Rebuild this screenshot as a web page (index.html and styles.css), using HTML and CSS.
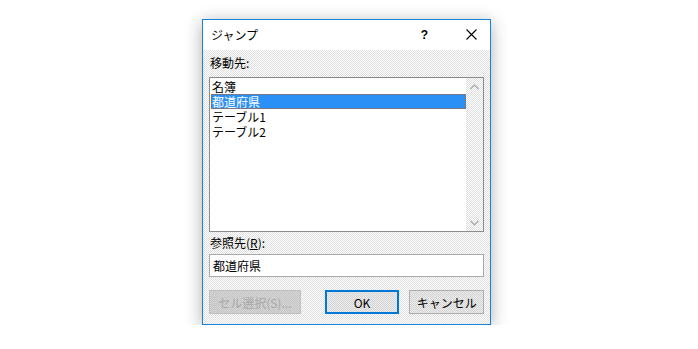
FILE: index.html
```html
<!DOCTYPE html>
<html lang="ja">

<head>
  <meta charset="UTF-8" />
  <title>ジャンプ</title>
  <link rel="stylesheet" href="styles.css">
</head>

<body>

  <div class="dialog">
    <div class="titlebar">
      <span class="title">ジャンプ</span>
      <span class="help">?</span>
      <span class="close">
        <svg width="11" height="11" viewBox="0 0 11 11">
          <path d="M0.5 0.5 L10.5 10.5 M10.5 0.5 L0.5 10.5" stroke="#000" stroke-width="1.1" fill="none" />
        </svg>
      </span>
    </div>

    <div class="content">
      <div class="label">移動先:</div>

      <div class="listbox">
        <ul class="items">
          <li>名簿</li>
          <li class="selected">都道府県</li>
          <li>テーブル1</li>
          <li>テーブル2</li>
        </ul>
        <div class="scrollbar">
          <svg width="9" height="6" viewBox="0 0 9 6">
            <path d="M0.5 5 L4.5 1 L8.5 5" stroke="#a6a6a6" stroke-width="1.2" fill="none" />
          </svg>
          <svg width="9" height="6" viewBox="0 0 9 6">
            <path d="M0.5 1 L4.5 5 L8.5 1" stroke="#a6a6a6" stroke-width="1.2" fill="none" />
          </svg>
        </div>
      </div>

      <div class="label ref">参照先(<u>R</u>):</div>
      <div class="textbox">都道府県</div>

      <div class="buttons">
        <button class="btn disabled">セル選択(S)...</button>
        <button class="btn default">OK</button>
        <button class="btn">キャンセル</button>
      </div>
    </div>
  </div>

</body>

</html>
```

FILE: styles.css
```css
body {
  margin: 0;
  background: #fff;
  font-family: "Noto Sans CJK JP", "Noto Sans", sans-serif;
  font-size: 12px;
  color: #000;
}

/* grey areas are dithered in the shot, so use a 2px checker */
.dialog {
  box-sizing: border-box;
  width: 289px;
  height: 306px;
  margin: 19px 0 0 202px;
  border: 1px solid #1883d7;
  background-color: #fff;
  background-image: repeating-conic-gradient(#dedede 0 25%, #fff 0 50%);
  background-size: 2px 2px;
  box-shadow: 0 3px 16px rgba(0, 0, 0, 0.32);
}

.titlebar {
  display: flex;
  align-items: center;
  height: 29px;
  background: #fff;
  padding-bottom: 1px;
}

.title {
  margin-left: 8px;
  line-height: 16px;
  flex: 1;
}

.help {
  font-family: "Liberation Sans", sans-serif;
  font-size: 12px;
  font-weight: bold;
  margin-right: 38px;
}

.close {
  display: flex;
  margin-right: 13px;
}

.content {
  padding: 0 6px;
}

.label {
  margin-top: 5px;
  padding-left: 1px;
  line-height: 16px;
  height: 16px;
}

.label.ref {
  margin-top: 3px;
}

.listbox {
  box-sizing: border-box;
  display: flex;
  height: 155px;
  margin-top: 6px;
  border: 1px solid #8c8c8c;
  background: #fff;
}

.items {
  flex: 1;
  list-style: none;
  margin: 0;
  padding: 1px 0 0 1px;
}

.items li {
  height: 15px;
  line-height: 15px;
  padding-left: 1px;
  white-space: nowrap;
  overflow: hidden;
}

.items li.selected {
  box-sizing: border-box;
  background: #2b90f5;
  color: #fff;
  outline: 1px dotted #c0601a;
  outline-offset: -1px;
}

.scrollbar {
  width: 17px;
  display: flex;
  flex-direction: column;
  justify-content: space-between;
  align-items: center;
  padding: 6px 0 5px;
  background-image: repeating-conic-gradient(#dedede 0 25%, #fff 0 50%);
  background-size: 2px 2px;
}

.textbox {
  box-sizing: border-box;
  height: 23px;
  margin-top: 3px;
  padding-left: 3px;
  line-height: 21px;
  border: 1px solid #a9a9a9;
  background: #fff;
}

.buttons {
  display: flex;
  margin-top: 13px;
  gap: 10px;
}

.btn {
  box-sizing: border-box;
  width: 75px;
  height: 24px;
  padding: 0;
  font-family: inherit;
  font-size: 12px;
  color: #000;
  border: 1px solid #adadad;
  background-color: #fff;
  background-image: repeating-conic-gradient(#d4d4d4 0 25%, #ececec 0 50%);
  background-size: 2px 2px;
}

.btn.disabled {
  width: 92px;
  margin-right: 14px;
  color: #a8a8a8;
  border-color: #bfbfbf;
  background-image: repeating-conic-gradient(#c4c4c4 0 25%, #d6d6d6 0 50%);
}

.btn.default {
  border: 2px solid #0078d7;
}
```
